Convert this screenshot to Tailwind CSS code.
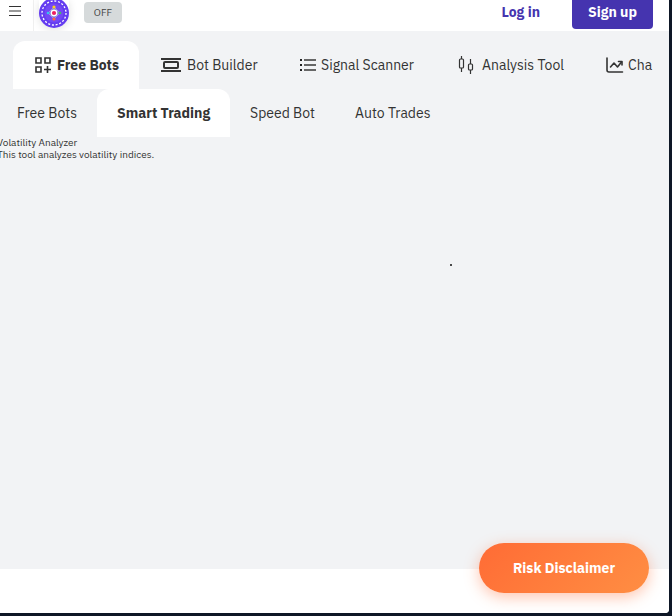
<!DOCTYPE html>
<html lang="en">
<head>
<meta charset="utf-8">
<meta name="viewport" content="width=device-width, initial-scale=1">
<title>Smart Trading</title>
<script src="https://cdn.jsdelivr.net/npm/@tailwindcss/browser@4"></script>
</head>
<body class="h-screen overflow-hidden bg-[#0e1726] pr-[3px] pb-[3px] font-['IBM_Plex_Sans','Noto_Sans',sans-serif] text-sm text-[#333333]">
<div class="relative flex h-full flex-col overflow-hidden rounded-br-sm bg-white">
  <header class="flex h-[31px] shrink-0 items-start bg-white">
    <button type="button" aria-label="Menu" class="flex h-full w-[34px] justify-center border-r border-[#f0f0f0] pr-1 pt-1">
      <svg class="h-4 w-3" viewBox="0 0 12 16" shape-rendering="crispEdges"><path d="M0 2h12v1H0zM0 11h12v1H0z" fill="#333"/><path d="M0 6h12v2H0z" fill="#999"/></svg>
    </button>
    <a href="#" aria-label="Home" class="ml-[5px] block h-7 w-[30px] rounded-b-full shadow-[0_2px_8px_rgba(0,0,0,0.12)]">
      <svg class="h-7 w-[30px]" viewBox="0 2 30 28">
        <circle cx="15" cy="15" r="15" fill="#643cf0"/>
        <circle cx="15" cy="15" r="12" fill="none" stroke="#fff" stroke-width="1.3" stroke-dasharray="2 1.77"/>
        <circle cx="15" cy="15" r="9.5" fill="#7448f5"/>
        <path d="M15 9l6 6-6 6-6-6z" fill="#7a78d8" stroke="#a997e6" stroke-width=".8"/>
        <circle cx="15" cy="9" r="1.6" fill="#ffd21c"/><circle cx="15" cy="21" r="1.6" fill="#ff6848"/>
        <circle cx="9" cy="15" r="1.3" fill="#35c4f2"/><circle cx="21" cy="15" r="1.3" fill="#45ba68"/>
        <circle cx="15" cy="15" r="3.4" fill="#fff"/><circle cx="15" cy="15" r="2.1" fill="#ef1f62"/>
      </svg>
    </a>
    <button type="button" class="mt-[2px] ml-[15px] h-[21px] w-[38px] rounded bg-[#d6dadb] text-[10px] leading-5 text-[#444444]">OFF</button>
    <div class="ml-auto flex pr-4">
      <a href="#" class="mr-8 block h-6 text-sm leading-6 font-bold text-[#4534af]">Log in</a>
      <a href="#" class="block h-[29px] w-[81px] rounded-b bg-[#4534af] text-center text-sm leading-6 font-bold text-white">Sign up</a>
    </div>
  </header>
  <main class="min-h-0 flex-1 overflow-hidden bg-[#f2f3f5] pt-[10px]">
    <nav aria-label="Tools" class="mr-4 ml-[13px] flex h-12 overflow-hidden whitespace-nowrap">
      <a href="#" class="flex w-[126px] shrink-0 items-center gap-1.5 rounded-t-xl bg-white pl-[22px] font-bold">
        <svg class="size-4 shrink-0" viewBox="0 0 16 16" fill="none" stroke="#333" stroke-width="1.6"><path d="M1 1h5v5H1zM10 1h5v5h-5zM1 10h5v5H1zM12.5 9v7M9 12.5h7"/></svg>
        <span>Free Bots</span>
      </a>
      <a href="#" class="flex w-[138px] shrink-0 items-center gap-1.5 pl-[22px]">
        <svg class="h-4 w-5 shrink-0" viewBox="0 0 20 16"><path d="M0 1h20v2H0zM0 13h20v2H0z" fill="#333"/><rect x="3" y="5" width="14" height="6" rx="1" fill="none" stroke="#333" stroke-width="2"/></svg>
        <span>Bot Builder</span>
      </a>
      <a href="#" class="flex w-[157px] shrink-0 items-center gap-1 pl-[22px]">
        <svg class="h-4 w-[18px] shrink-0" viewBox="0 0 18 16"><path d="M5 2h12v2H5zM5 7h12v2H5zM5 12h12v2H5z" fill="#666"/><path d="M1 2h2v2H1zM1 7h2v2H1zM1 12h2v2H1z" fill="#222"/></svg>
        <span>Signal Scanner</span>
      </a>
      <a href="#" class="flex w-[150px] shrink-0 items-center gap-2 pl-6">
        <svg class="h-[18px] w-4 shrink-0" viewBox="0 0 16 18" fill="none" stroke="#333" stroke-width="1.2"><path d="M3.5 0v3M3.5 12v4M12.5 3v5M12.5 14v4"/><rect x="1.5" y="3" width="4" height="9" rx="1"/><rect x="10.5" y="8" width="4" height="6" rx="1"/></svg>
        <span>Analysis Tool</span>
      </a>
      <a href="#" class="flex shrink-0 items-center gap-1 pl-[22px]">
        <svg class="h-4 w-[18px] shrink-0" viewBox="0 0 18 16" fill="none" stroke="#333" stroke-width="1.6" stroke-linecap="round" stroke-linejoin="round"><path d="M1 1v12q0 2 2 2h13.5M4.5 10l3.5-4 3.5 4 4-5"/><path d="M12.5 4.5h3.5v3.5"/></svg>
        <span>Cha</span>
      </a>
    </nav>
    <div class="-ml-[3px]">
      <nav aria-label="Bots" class="flex h-12 whitespace-nowrap">
        <a href="#" class="flex w-[100px] items-center pl-5">Free Bots</a>
        <a href="#" class="flex w-[133px] items-center rounded-t-xl bg-white pl-5 font-bold">Smart Trading</a>
        <a href="#" class="flex w-[105px] items-center pl-5">Speed Bot</a>
        <a href="#" class="flex items-center px-5">Auto Trades</a>
      </nav>
      <div class="text-[10px] leading-3">
        <h1>Volatility Analyzer</h1>
        <p>This tool analyzes volatility indices.</p>
      </div>
    </div>
    <div class="mt-[103px] ml-[67.2%] h-[2px] w-[2px] rounded-full bg-[#111111]"></div>
  </main>
  <footer class="h-11 shrink-0 bg-white"></footer>
  <button type="button" class="absolute right-5 bottom-5 h-[50px] w-[170px] rounded-full bg-linear-135 from-[#ff6b35] to-[#ff8e43] text-sm font-bold text-white shadow-[0_4px_15px_rgba(255,107,53,0.4)]">Risk Disclaimer</button>
</div>
</body>
</html>
